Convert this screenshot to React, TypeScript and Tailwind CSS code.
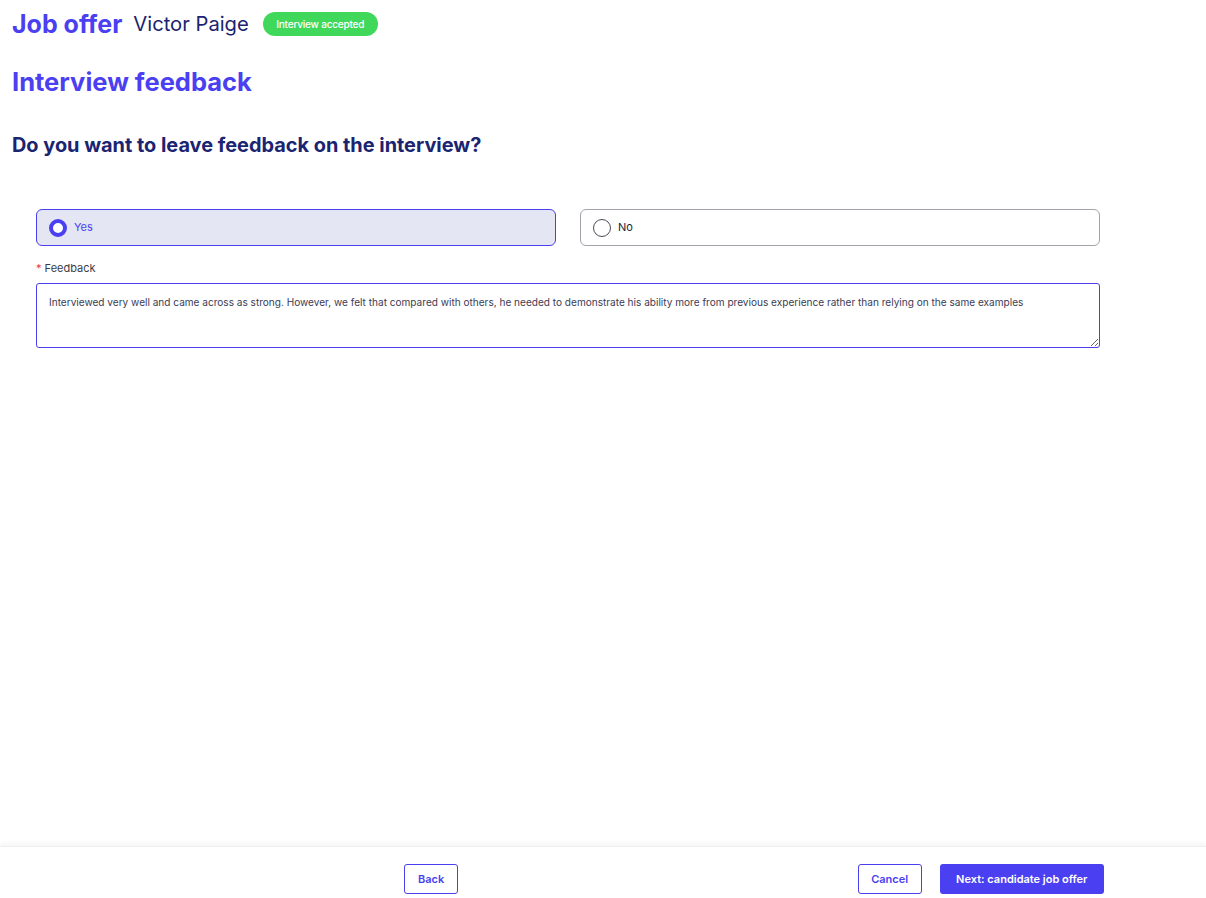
import { useState } from 'react';

const font = { fontFamily: 'Inter, "Noto Sans", sans-serif' };

type Choice = 'yes' | 'no';

function RadioCard({ label, checked, onSelect }: { label: string; checked: boolean; onSelect: () => void }) {
  return (
    <button
      type="button"
      onClick={onSelect}
      className={`flex h-[37px] flex-1 items-center gap-[7px] rounded-md border px-[12px] text-left ${
        checked ? 'border-[#4b3ff2] bg-[#e4e6f3]' : 'border-[#a3a3ab] bg-white'
      }`}
    >
      <span
        className={`h-[18px] w-[18px] shrink-0 rounded-full bg-white ${
          checked ? 'border-[4px] border-[#4b3ff2]' : 'border border-[#4b4b55]'
        }`}
      />
      <span className={`text-[11px] ${checked ? 'text-[#4b3ff2]' : 'text-[#1c1c3a]'}`}>{label}</span>
    </button>
  );
}

export default function App() {
  const [choice, setChoice] = useState<Choice>('yes');
  const [feedback, setFeedback] = useState(
    'Interviewed very well and came across as strong. However, we felt that compared with others, he needed to demonstrate his ability more from previous experience rather than relying on the same examples'
  );

  return (
    <div className="flex h-screen flex-col bg-white" style={font}>
      <main className="flex-1 px-3">
        <div className="flex items-center pt-[8px]">
          <h1 className="text-[25px] font-bold leading-[32px] text-[#4b3ff2]">Job offer</h1>
          <span className="ml-[11px] text-[20.2px] leading-[32px] text-[#1b2470]">Victor Paige</span>
          <span className="ml-[14px] flex h-[24px] items-center rounded-full bg-[#3fd85b] px-[13.5px] text-[10px] font-medium tracking-[-0.2px] text-white">
            Interview accepted
          </span>
        </div>

        <h2 className="mt-[26px] text-[25.5px] font-bold leading-[32px] text-[#4b3ff2]">Interview feedback</h2>

        <h3 className="mt-[33px] text-[19.9px] font-bold leading-[28px] text-[#1b2470]">
          Do you want to leave feedback on the interview?
        </h3>

        <div className="mt-[50px] w-[1064px] pl-[24px] box-content">
          <div className="flex gap-[24px]">
            <RadioCard label="Yes" checked={choice === 'yes'} onSelect={() => setChoice('yes')} />
            <RadioCard label="No" checked={choice === 'no'} onSelect={() => setChoice('no')} />
          </div>

          {choice === 'yes' && (
            <div className="mt-[14px]">
              <label className="block text-[11px] leading-[16px] text-[#3c3c48]">
                <span className="text-[#e5394d]">*</span> Feedback
              </label>
              <textarea
                value={feedback}
                onChange={(e) => setFeedback(e.target.value)}
                className="mt-[7px] block h-[65px] w-full rounded-[3px] border border-[#4b3ff2] px-[12px] py-[10px] text-[10.07px] leading-[16px] text-[#3b3b55] outline-none"
              />
            </div>
          )}
        </div>
      </main>

      <footer className="flex h-[52px] shrink-0 items-start justify-between border-t border-[#f0f0f0] bg-white pl-[404px] pr-[102px] pt-[17px] shadow-[0_-3px_4px_rgba(0,0,0,0.04)]">
        <button className="h-[30px] rounded-[3px] border border-[#4b3ff2] px-[13px] text-[11px] font-semibold text-[#4b3ff2]">
          Back
        </button>
        <div className="flex gap-[18px]">
          <button className="h-[30px] rounded-[3px] border border-[#4b3ff2] px-[12.5px] text-[11px] font-semibold text-[#4b3ff2]">
            Cancel
          </button>
          <button className="h-[30px] rounded-[3px] bg-[#4b3ff2] px-[16.5px] text-[11px] font-semibold text-white">
            Next: candidate job offer
          </button>
        </div>
      </footer>
    </div>
  );
}
